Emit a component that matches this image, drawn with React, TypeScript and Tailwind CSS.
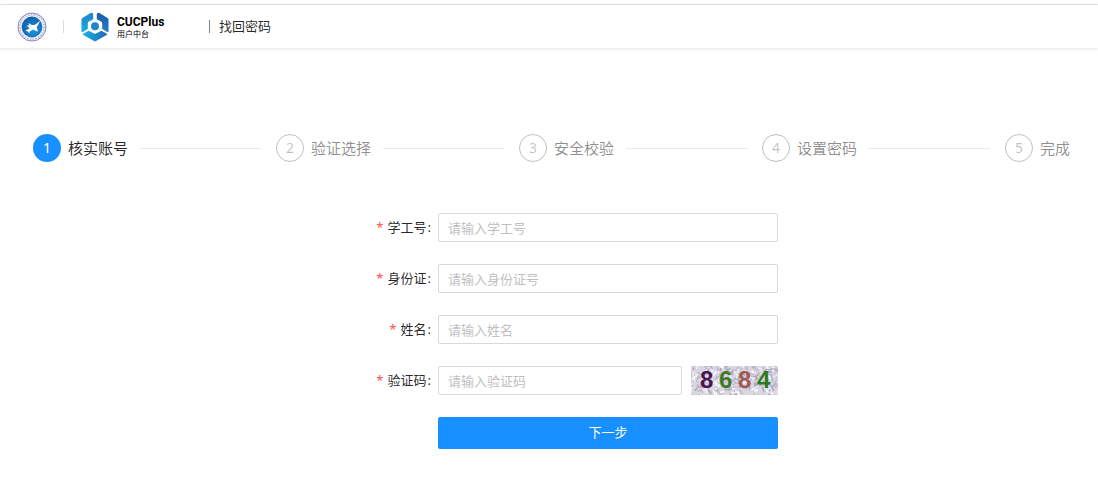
import { useState } from 'react'

const steps = ['核实账号', '验证选择', '安全校验', '设置密码', '完成']

const fields = [
  { id: 'account', label: '学工号', placeholder: '请输入学工号' },
  { id: 'idCard', label: '身份证', placeholder: '请输入身份证号' },
  { id: 'name', label: '姓名', placeholder: '请输入姓名' },
  { id: 'captcha', label: '验证码', placeholder: '请输入验证码' },
]

const captchaDigits = [
  { char: '8', x: 9, color: '#4a1450' },
  { char: '6', x: 28, color: '#3f7a2c' },
  { char: '8', x: 47, color: '#a05a50' },
  { char: '4', x: 66, color: '#2f7a1e' },
]

const noiseColors = ['#a9a4b8', '#c3bdd0', '#ffffff', '#b0b3b8', '#c2b4cf', '#f1eff5']

// small seeded generator so the noise is the same on each render
function makeNoise(count: number) {
  let seed = 8684
  const next = () => {
    seed = (seed * 16807) % 2147483647
    return seed / 2147483647
  }
  return Array.from({ length: count }, () => ({
    x: next() * 87,
    y: next() * 29,
    dx: next() * 10 - 5,
    dy: next() * 10 - 5,
    color: noiseColors[Math.floor(next() * noiseColors.length)],
  }))
}

const noise = makeNoise(320)

function SchoolEmblem() {
  return (
    <svg className="w-[30px] h-[30px]" viewBox="0 0 30 30" aria-hidden="true">
      <defs>
        <radialGradient id="emblemFill" cx="0.6" cy="0.65" r="0.65">
          <stop offset="0" stopColor="#1c9ad8" />
          <stop offset="1" stopColor="#125cab" />
        </radialGradient>
      </defs>
      <circle cx="15" cy="15" r="14" fill="#f4f5fb" stroke="#8286b8" strokeWidth="1" />
      <circle cx="15" cy="15" r="12.2" fill="none" stroke="#b3b9da" strokeWidth="1.6" strokeDasharray="1.6 1.2" />
      <circle cx="15" cy="15" r="10.4" fill="url(#emblemFill)" />
      <path
        d="M8.4 18.8 C10 17.4 11.2 17.2 12.6 16.2 L9.6 13.4 L12.4 13.6 L11.4 11 C13.4 12.4 15.2 13.4 17.2 13 C19.4 12.4 21.2 10.6 22.8 8.6 C22.4 11.4 21 13.6 19.6 15.2 C20 16.6 20.8 17.8 20.8 19.6 C19.4 19.4 17.8 18.6 16.6 17.6 C14.8 18.4 14 19 12.8 19.4 L12.2 21.4 L11 19.6 Z"
        fill="#fff"
      />
    </svg>
  )
}

function CucLogo() {
  return (
    <svg className="w-7 h-[30px]" viewBox="0 0 28 30" aria-hidden="true">
      <defs>
        <linearGradient id="logoLeft" x1="0" y1="0" x2="0" y2="1">
          <stop offset="0" stopColor="#2480cc" />
          <stop offset="1" stopColor="#16b0e0" />
        </linearGradient>
        <linearGradient id="logoRight" x1="0" y1="0" x2="0" y2="1">
          <stop offset="0" stopColor="#1b5aa8" />
          <stop offset="1" stopColor="#2080cc" />
        </linearGradient>
        <linearGradient id="logoBottom" x1="0" y1="0" x2="1" y2="0">
          <stop offset="0" stopColor="#15b4e0" />
          <stop offset="1" stopColor="#2464b8" />
        </linearGradient>
      </defs>
      <path d="M0.5 7.4 Q0.5 6.4 1.4 5.9 L9.6 1.1 Q12 0.2 12.2 2.6 V7.2 L7.6 9.8 Q6.8 10.4 6.8 11.4 V17 L1.6 20 Q0.5 20.4 0.5 19.2 Z" fill="url(#logoLeft)" />
      <path d="M27.5 7.4 Q27.5 6.4 26.6 5.9 L18.4 1.1 Q16 0.2 15.8 2.6 V7.2 L20.4 9.8 Q21.2 10.4 21.2 11.4 V17 L26.4 20 Q27.5 20.4 27.5 19.2 Z" fill="url(#logoRight)" />
      <path d="M2.2 21.8 L7.6 18.8 L13 21.6 Q14 22.1 15 21.6 L20.4 18.8 L25.8 21.8 Q26.4 22.4 25.6 23 L15 29 Q14 29.6 13 29 L2.4 23 Q1.6 22.4 2.2 21.8 Z" fill="url(#logoBottom)" />
      <circle cx="14" cy="14.2" r="4" fill="#1f86cf" />
    </svg>
  )
}

function Captcha() {
  return (
    <button type="button" aria-label="换一张验证码" className="w-[87px] h-[29px] shrink-0 cursor-pointer">
      <svg className="block w-full h-full" viewBox="0 0 87 29">
        <rect width="87" height="29" fill="#d9d6e2" />
        {noise.map((n, i) => (
          <path key={i} d={`M${n.x} ${n.y} l${n.dx} ${n.dy}`} stroke={n.color} strokeWidth="1.4" />
        ))}
        {captchaDigits.map((d) => (
          <text key={d.x} x={d.x} y="22" fill={d.color} fontSize="24" fontWeight="700" fontFamily="Liberation Sans, sans-serif">
            {d.char}
          </text>
        ))}
      </svg>
    </button>
  )
}

export default function App() {
  const [values, setValues] = useState<Record<string, string>>({})

  const handleSubmit = (e: React.FormEvent) => {
    e.preventDefault()
  }

  return (
    <div className="min-h-screen bg-white pt-1 font-['Noto_Sans','Noto_Sans_CJK_SC',sans-serif] text-[13px] text-black/85">
      <header className="flex h-11 items-center border-t border-[#dfe3e8] pl-[17px] shadow-[0_1px_3px_rgba(0,21,41,0.12)]">
        <SchoolEmblem />
        <span className="ml-4 h-[13px] w-px bg-[#dddddd]" />
        <div className="ml-[17px] flex items-center gap-2">
          <CucLogo />
          <div className="w-12 text-black">
            <div className="font-['Roboto',sans-serif] text-xs leading-[14px] font-bold">CUCPlus</div>
            <div className="font-['Noto_Sans_CJK_SC',sans-serif] text-[8px] leading-[10px]">用户中台</div>
          </div>
        </div>
        <span className="ml-11 h-[13px] w-px bg-[#888888]" />
        <h1 className="ml-[9px]">找回密码</h1>
      </header>

      <main>
        <ol className="mt-[86px] flex pl-[33px] pr-7 text-[15px]">
          {steps.map((title, i) => {
            const active = i === 0
            const last = i === steps.length - 1
            return (
              <li key={title} className={last ? 'flex items-center' : 'flex flex-1 items-center'}>
                <span
                  className={
                    active
                      ? 'flex size-7 shrink-0 items-center justify-center rounded-full bg-[#1890ff] text-sm text-white'
                      : 'flex size-7 shrink-0 items-center justify-center rounded-full border border-black/25 text-sm text-black/25'
                  }
                >
                  {i + 1}
                </span>
                <span className={active ? 'ml-[7px] whitespace-nowrap' : 'ml-[7px] whitespace-nowrap text-black/45'}>
                  {title}
                </span>
                {!last && <span className="ml-3 mr-[15px] h-px flex-1 bg-[#ebebeb]" />}
              </li>
            )
          })}
        </ol>

        <form onSubmit={handleSubmit} className="mx-auto mt-[51px] flex w-full max-w-[458px] flex-col gap-[22px]">
          {fields.map((field) => (
            <div key={field.id} className="flex items-center">
              <label htmlFor={field.id} className="w-[111px] shrink-0 text-right">
                <span className="mr-1 text-[#ff4d4f]">*</span>
                {field.label}
                <span className="ml-px">:</span>
              </label>
              <div className="ml-[7px] flex flex-1 gap-[9px]">
                <input
                  id={field.id}
                  type="text"
                  placeholder={field.placeholder}
                  value={values[field.id] ?? ''}
                  onChange={(e) => setValues({ ...values, [field.id]: e.target.value })}
                  className="h-[29px] w-full min-w-0 flex-1 rounded-xs border border-[#d9d9d9] px-[9px] placeholder:text-[#bfbfbf] focus:border-[#40a9ff] focus:outline-none"
                />
                {field.id === 'captcha' && <Captcha />}
              </div>
            </div>
          ))}
          <button
            type="submit"
            className="ml-[118px] h-8 cursor-pointer rounded-xs bg-[#1890ff] text-white hover:bg-[#40a9ff]"
          >
            下一步
          </button>
        </form>
      </main>
    </div>
  )
}
